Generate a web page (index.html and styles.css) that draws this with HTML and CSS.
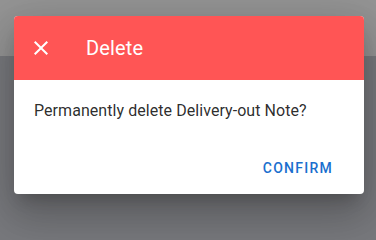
FILE: index.html
```html
<!DOCTYPE html>
<html>
<head>
<meta charset="utf-8">
<link rel="stylesheet" href="styles.css">
</head>
<body>
<div class="page">
  <div class="appbar"></div>
  <div class="content"></div>
</div>
<div class="dialog">
  <div class="dialog-header">
    <span class="close-icon">
      <svg viewBox="0 0 24 24" width="24" height="24"><path fill="#fff" d="M19 6.41L17.59 5 12 10.59 6.41 5 5 6.41 10.59 12 5 17.59 6.41 19 12 13.41 17.59 19 19 17.59 13.41 12z"/></svg>
    </span>
    <span class="dialog-title">Delete</span>
  </div>
  <div class="dialog-body">Permanently delete Delivery-out Note?</div>
  <div class="dialog-actions">
    <button class="btn-confirm">CONFIRM</button>
  </div>
</div>
</body>
</html>
```
FILE: styles.css
```css
html {
  background: #78797d;
}
html, body {
  margin: 0;
  padding: 0;
  font-family: Roboto, "Liberation Sans", sans-serif;
}
body {
  width: 376px;
  min-height: 100vh;
}
.page {
  display: flex;
  flex-direction: column;
  min-height: 100vh;
}
.appbar {
  height: 56px;
  background: #949494;
}
.content {
  flex: 1;
  background: #78797d;
}
.dialog {
  position: absolute;
  left: 14px;
  top: 16px;
  width: 350px;
  height: 178px;
  background: #fff;
  border-radius: 4px;
  overflow: hidden;
  display: flex;
  flex-direction: column;
  box-shadow: 0 11px 15px -7px rgba(0,0,0,0.2), 0 24px 38px 3px rgba(0,0,0,0.14), 0 9px 46px 8px rgba(0,0,0,0.12);
}
.dialog-header {
  height: 64px;
  background: #ff5555;
  display: flex;
  align-items: center;
  padding-left: 15px;
  color: #fff;
}
.close-icon {
  width: 24px;
  height: 24px;
  display: flex;
}
.dialog-title {
  margin-left: 33px;
  font-size: 20px;
  font-weight: 400;
  letter-spacing: 0.15px;
}
.dialog-body {
  padding: 19px 20px 0 20px;
  font-size: 16px;
  line-height: 24px;
  letter-spacing: 0.06px;
  color: rgba(0,0,0,0.84);
}
.dialog-actions {
  margin-top: auto;
  display: flex;
  justify-content: flex-end;
  padding: 0 23px 8px 0;
}
.btn-confirm {
  height: 36px;
  padding: 0 8px;
  border: none;
  background: transparent;
  font-family: Roboto, "Liberation Sans", sans-serif;
  font-size: 14px;
  font-weight: 500;
  letter-spacing: 1.25px;
  color: #1a6fce;
}
```
